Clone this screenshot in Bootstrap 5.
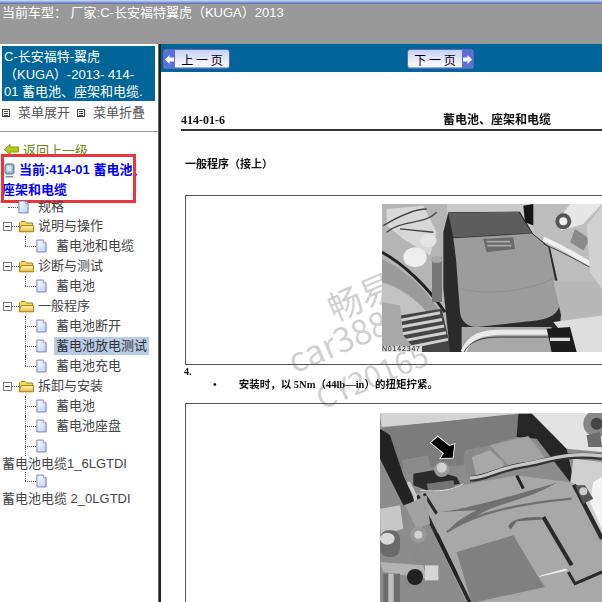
<!DOCTYPE html>
<html lang="zh">
<head>
<meta charset="utf-8">
<title>蓄电池、座架和电缆</title>
<link href="https://cdn.jsdelivr.net/npm/bootstrap@5.3.0/dist/css/bootstrap.min.css" rel="stylesheet">
<style>
html,body{height:602px;overflow:hidden;background:#fff}
body{font-family:"Liberation Sans","Noto Sans CJK SC",sans-serif;font-size:13px;line-height:1.2;color:#333;width:602px;position:relative}
.topstripe{height:4px;background:linear-gradient(#d5def2,#4a6cc0)}
.topbar{height:40px;background:#999;color:#fff;padding:0 2px;font-size:13px;line-height:17px;white-space:nowrap}
.mainrow{height:558px}
.leftpane{width:158px;flex:none;overflow:hidden;position:relative}
.divider{width:3px;flex:none;background:#222;border-left:1px solid #666}
.rightpane{flex:1;min-width:0;position:relative;overflow:hidden}
.titlebox{margin:2px 2px 0 2px;width:153px;height:55px;background:#069;color:#fff;font-size:13px;line-height:17.500px;padding:2px 0 0 2px;overflow:hidden}
.menurow{padding:4px 2px 0;border-bottom:1px solid #999;height:31px;color:#555;gap:7px}
.menuitem{display:flex;align-items:center;gap:8px;height:16px;white-space:nowrap}
.menubox{width:8px;height:8px;border:1px solid #444;background:linear-gradient(#444,#444) center/4px 1px no-repeat,linear-gradient(#444,#444) center 1px/4px 1px no-repeat,linear-gradient(#444,#444) center 5px/4px 1px no-repeat}
.backrow{padding:12px 0 0 4px;height:21px;gap:4px;color:#6c8a12;line-height:14px;white-space:nowrap}
.backrow a{color:#6c8a12;text-decoration:underline}
.currentbox{font-weight:700;color:#00f;line-height:20px;height:47px;padding:7px 2px 0 2px;font-size:13px}
.currentline{padding-left:2px;display:flex;align-items:center;gap:4px;white-space:nowrap}
.redmark{position:absolute;left:1px;top:110px;width:135px;height:49px;border:3px solid #e9353c;pointer-events:none}
.treelist{color:#444;margin-top:-3px}
.treerow{height:20px;display:flex;align-items:center;position:relative;white-space:nowrap}
.rootrow{padding-left:18px;gap:4px}
.rootrow::before{content:"";position:absolute;left:11px;width:8px;border-top:1px dotted #555}
.plainrow{padding-left:18px;gap:9px;height:19px}
.plainrow::before{content:"";position:absolute;left:8px;width:10px;border-top:1px dotted #555;top:10px}
.minusbox{position:absolute;left:3px;top:6px;width:9px;height:9px;background:linear-gradient(#444,#444) center/5px 1px no-repeat #fff;border:1px solid #777;z-index:1}
.childrow{padding-left:36px;gap:9px}
.childrow::before{content:"";position:absolute;left:25px;width:11px;border-top:1px dotted #555;top:10px}
.childrow::after{content:"";position:absolute;left:25px;top:0;height:20px;border-left:1px dotted #555}
.lastchild::after{height:10px}
.selectedtext{background:#b8cbe8;padding:0 2px;margin-left:-2px;line-height:18px;color:#333}
.looseline{height:16px;padding-left:2px;line-height:16px;white-space:nowrap;color:#444}
.looselast{height:18px;line-height:18px;margin-top:1px}
.iconrow{height:17px}
.iconrow::before{top:9px}.iconrow::after{height:9px}
.navstrip{height:28px;background:#069;padding:5px 0 0 2px}
.pagebtn{width:67px;height:20px;padding:0;border:1px solid #5a68bd;border-radius:3px;background:linear-gradient(#c9d0f7,#fff);box-shadow:inset 0 -1px 0 #9aa6dc;color:#000;font-size:12px;line-height:17px;display:flex;align-items:center;overflow:hidden;font-family:"Noto Sans CJK SC",sans-serif}
.pagebtn:hover{color:#000}
.arrowcell{width:11px;height:100%;background:#5a6fd8;flex:none;display:flex;align-items:center;justify-content:center}
.btnlabel{flex:1;text-align:center;white-space:pre}
.nextbtn{margin-left:177px}
.docpage{font-family:"Liberation Serif","Noto Sans CJK SC",serif;color:#111;filter:blur(.35px);padding:0 0 0 20px;position:relative;z-index:1}
.dochead{height:59px;border-bottom:2px solid #333;padding-top:40px;font-weight:700;font-size:12px;line-height:17px;width:460px;position:relative}
.doctitle{position:absolute;left:262px;top:38px;font-size:12px;font-weight:700;white-space:nowrap;font-family:"Noto Sans CJK SC",sans-serif}
.subhead{height:64px;padding:26px 0 0 4px;font-size:11px;font-weight:700;font-family:"Noto Sans CJK SC",sans-serif}
.figbox{margin-left:4px;width:460px;border:1.500px solid #555;display:flex;justify-content:flex-start}
.figone{height:170px;padding:8px 0 0 196px}
.figtwo{height:230px;padding:9px 0 0 194px;margin-top:11px}
.stepno{font-size:10px;font-weight:700;line-height:12px;padding:1px 0 0 3px}
.stepline{font-size:10.500px;font-weight:700;line-height:14px;padding-left:32px;display:flex;gap:22px;white-space:nowrap}
.photoart{display:block;flex:none}
.wmark{position:absolute;color:rgba(140,140,140,.42);transform:rotate(-23deg);transform-origin:left center;white-space:nowrap;font-family:"Noto Sans CJK SC","Liberation Sans",sans-serif;line-height:1;pointer-events:none;z-index:0}
.wm1{left:168px;top:248px;font-size:34px}
.wm2{left:128px;top:300px;font-size:34px}
.wm3{left:156px;top:339px;font-size:30px}
</style>
</head>
<body>
<svg width="0" height="0" class="position-absolute">
<defs>
<linearGradient id="pg" x1="0" y1="0" x2="1" y2="1"><stop offset="0" stop-color="#fff"/><stop offset="1" stop-color="#b9cef0"/></linearGradient>
<linearGradient id="fg" x1="0" y1="0" x2="0" y2="1"><stop offset="0" stop-color="#fff6b8"/><stop offset="1" stop-color="#e8bd45"/></linearGradient>
<symbol id="pageic" viewBox="0 0 12 14"><path d="M1 .5h7l3 3v10H1z" fill="url(#pg)" stroke="#6b78b5"/><path d="M8 .5v3h3" fill="#fff" stroke="#8c97c8"/></symbol>
<symbol id="folderic" viewBox="0 0 16 13"><path d="M1.5 11.5V3l1.5-1.5h4L8.500 3h6v8.500z" fill="#f5d469" stroke="#a8861c"/><path d="M1 11.800 3 5.500h12.500v6.300z" fill="url(#fg)" stroke="#a8861c"/></symbol>
<filter id="soft"><feGaussianBlur stdDeviation="2"/></filter>
</defs>
</svg>
<div class="topstripe"></div>
<div class="topbar">当前车型： 厂家:C-长安福特翼虎（KUGA）2013</div>
<div class="d-flex mainrow">
  <aside class="leftpane">
    <div class="titlebox">C-长安福特-翼虎<br>（KUGA）-2013- 414-<br>01 蓄电池、座架和电缆.</div>
    <div class="d-flex menurow">
      <span class="menuitem"><i class="menubox"></i>菜单展开</span>
      <span class="menuitem"><i class="menubox"></i>菜单折叠</span>
    </div>
    <div class="d-flex backrow">
      <svg width="15" height="11" viewBox="0 0 15 11"><path d="M.500 5.500 6 .500v2.500h8.500v5H6v2.500z" fill="#a5d216" stroke="#a8860f"/></svg>
      <a href="#">返回上一级</a>
    </div>
    <div class="currentbox">
      <div class="currentline"><svg width="11" height="15" viewBox="0 0 11 15"><rect x="1" y="1" width="9" height="10" rx="2" fill="#8fb3d9" stroke="#50708f"/><rect x="2.500" y="2.500" width="5" height="6" fill="#d9ecf9"/><path d="M2 13h7l1 1.500H1z" fill="#7d8ea0"/></svg><span>当前:414-01 蓄电池、</span></div>
      <div class="text-nowrap">座架和电缆</div>
    </div>
    <div class="redmark"></div>
    <div class="treelist">
      <div class="treerow plainrow"><svg width="11" height="14"><use href="#pageic"/></svg><span>规格</span></div>
      <div class="treerow rootrow"><i class="minusbox"></i><svg width="16" height="13"><use href="#folderic"/></svg><span>说明与操作</span></div>
      <div class="treerow childrow lastchild"><svg width="11" height="14"><use href="#pageic"/></svg><span>蓄电池和电缆</span></div>
      <div class="treerow rootrow"><i class="minusbox"></i><svg width="16" height="13"><use href="#folderic"/></svg><span>诊断与测试</span></div>
      <div class="treerow childrow lastchild"><svg width="11" height="14"><use href="#pageic"/></svg><span>蓄电池</span></div>
      <div class="treerow rootrow"><i class="minusbox"></i><svg width="16" height="13"><use href="#folderic"/></svg><span>一般程序</span></div>
      <div class="treerow childrow"><svg width="11" height="14"><use href="#pageic"/></svg><span>蓄电池断开</span></div>
      <div class="treerow childrow"><svg width="11" height="14"><use href="#pageic"/></svg><span class="selectedtext">蓄电池放电测试</span></div>
      <div class="treerow childrow lastchild"><svg width="11" height="14"><use href="#pageic"/></svg><span>蓄电池充电</span></div>
      <div class="treerow rootrow"><i class="minusbox"></i><svg width="16" height="13"><use href="#folderic"/></svg><span>拆卸与安装</span></div>
      <div class="treerow childrow"><svg width="11" height="14"><use href="#pageic"/></svg><span>蓄电池</span></div>
      <div class="treerow childrow"><svg width="11" height="14"><use href="#pageic"/></svg><span>蓄电池座盘</span></div>
      <div class="treerow childrow"><svg width="11" height="14"><use href="#pageic"/></svg></div>
      <div class="looseline">蓄电池电缆1_6LGTDI</div>
      <div class="treerow childrow iconrow lastchild"><svg width="11" height="14"><use href="#pageic"/></svg></div>
      <div class="looseline looselast">蓄电池电缆 2_0LGTDI</div>
    </div>
  </aside>
  <div class="divider"></div>
  <main class="rightpane">
    <div class="navstrip d-flex">
      <a class="btn pagebtn" href="#"><span class="arrowcell"><svg width="9" height="9" viewBox="0 0 9 9"><path d="M0 4.500 4.500 0v2.500H9v4H4.500V9z" fill="#fff"/></svg></span><span class="btnlabel">上 一 页</span></a>
      <a class="btn pagebtn nextbtn" href="#"><span class="btnlabel">下 一 页</span><span class="arrowcell"><svg width="9" height="9" viewBox="0 0 9 9"><path d="M9 4.500 4.500 0v2.500H0v4h4.500V9z" fill="#fff"/></svg></span></a>
    </div>
    <div class="wmark wm1">畅易</div>
    <div class="wmark wm2">car388</div>
    <div class="wmark wm3">CY20165</div>
    <div class="docpage">
      <div class="dochead">414-01-6<span class="doctitle">蓄电池、座架和电缆</span></div>
      <div class="subhead">一般程序（接上）</div>
      <div class="figbox figone">
        <svg class="photoart" width="220" height="148" viewBox="636 45 660 445" preserveAspectRatio="none">
          <g filter="url(#soft)">
          <rect x="636" y="45" width="660" height="445" fill="#c9c9c9"/>
          <path d="M636 45H830L860 490H636z" fill="#b5b5b5"/>
          <path d="M650 60 760 50 800 130 780 200 700 150 650 110z" fill="#d8d8d8"/>
          <path d="M640 110C690 80 740 60 770 60M650 130C700 90 760 110 800 70M690 120 790 130" stroke="#444" stroke-width="4" fill="none"/>
          <ellipse cx="735" cy="205" rx="35" ry="30" fill="#eee"/>
          <ellipse cx="775" cy="155" rx="25" ry="20" fill="#e4e4e4"/>
          <path d="M636 210C700 240 770 300 810 370L780 385C730 320 680 290 636 280z" fill="#9a9a9a"/>
          <path d="M636 190C700 225 770 290 825 370" stroke="#222" stroke-width="9" fill="none"/>
          <path d="M636 280C690 300 740 330 770 370L700 385 636 340z" fill="#c2c2c2"/>
          <path d="M786 205h30v135h-30z" fill="#777"/><ellipse cx="800" cy="212" rx="17" ry="10" fill="#aaa"/>
          <path d="M690 380 815 360 845 490H740L690 430z" fill="#444"/>
          <g stroke="#d0d0d0" stroke-width="9"><path d="M690 395 810 372"/><path d="M692 415 816 392"/><path d="M698 435 822 412"/><path d="M706 455 828 432"/><path d="M722 475 834 452"/></g>
          <path d="M636 340 690 350 700 440 740 490H636z" fill="#a8a8a8"/>
          <path d="M1080 45H1296V490H1150z" fill="#bdbdbd"/>
          <path d="M820 130 835 70 1050 68 1090 135 1140 175 1178 345 1170 405 1220 490H840L820 300z" fill="#2c2c2c"/>
          <path d="M875 415H1145V490H875z" fill="#a8a8a8"/>
          <path d="M835 72 1045 68 1085 132 850 146z" fill="#5d5d5d"/>
          <path d="M850 148 1085 134 1135 175 1170 345C1165 375 1140 390 1100 395L920 415C890 415 872 395 870 370L858 210z" fill="#9c9c9c"/>
          <path d="M940 150 1030 145 1035 180 950 190z" fill="#6a6a6a"/>
          <path d="M950 158h70M952 170h72" stroke="#a9a9a9" stroke-width="5"/>
          <path d="M870 300C960 320 1060 310 1150 270" stroke="#8e8e8e" stroke-width="3" fill="none"/>
          <path d="M1060 50 1090 45 1090 110 1065 100z" fill="#181818"/>
          <path d="M1200 45 1296 45 1240 105 1175 125 1160 100z" fill="#e6e6e6"/>
          <circle cx="1180" cy="97" r="24" fill="#555"/><circle cx="1180" cy="97" r="12" fill="#eee"/>
          <path d="M1120 150C1190 180 1240 215 1296 245" stroke="#f0f0f0" stroke-width="14" fill="none"/>
          <path d="M1120 165C1190 195 1240 225 1296 255" stroke="#444" stroke-width="3" fill="none"/>
          <path d="M1150 275 1296 280V380L1180 410z" fill="#b8b8b8"/>
          <path d="M1215 120 1260 150 1240 185 1200 160z" fill="#8a8a8a"/>
          <path d="M1296 50V300L1260 250 1250 110z" fill="#d1d1d1"/>
          <path d="M1150 400 1296 380V490H1220z" fill="#ddd"/>
          <path d="M880 490C900 440 940 430 1000 430H1180" stroke="#eaeaea" stroke-width="16" fill="none"/>
          <path d="M880 495C900 452 940 445 1000 445H1180" stroke="#333" stroke-width="3" fill="none"/>
          <path d="M1130 420 1200 415 1220 490H1145z" fill="#1d1d1d"/>
          <path d="M1140 452h60" stroke="#ddd" stroke-width="10"/>
          <rect x="636" y="472" width="120" height="18" fill="#ddd"/>
          </g>
          <text x="636" y="488" font-size="21" textLength="114" font-family="Liberation Sans" fill="#111">N0142347</text>
        </svg>
      </div>
      <div class="stepno">4.</div>
      <div class="stepline"><span>•</span><span>安装时，以 5Nm（44lb—in）的扭矩拧紧。</span></div>
      <div class="figbox figtwo">
        <svg class="photoart" width="222" height="190" viewBox="630 53 666 570" preserveAspectRatio="none">
          <g filter="url(#soft)">
          <rect x="630" y="53" width="666" height="570" fill="#8c8c8c"/>
          <path d="M630 53H1100L1040 60 635 95z" fill="#d4d4d4"/>
          <path d="M636 98 1045 55 1040 125 960 150 885 165 880 210 700 220 680 235z" fill="#7c7c7c"/>
          <path d="M630 100 660 120 700 240 735 320 700 330 660 250 630 190z" fill="#222"/>
          <path d="M1045 55H1085L1160 130 1190 160 1210 250 1200 260 1100 130 1040 125z" fill="#262626"/>
          <path d="M1085 53H1296V170L1190 160z" fill="#e3e3e3"/>
          <circle cx="1280" cy="85" r="40" fill="#888"/><circle cx="1280" cy="85" r="18" fill="#444"/>
          <path d="M1250 120 1290 110 1296 155 1255 155z" fill="#6c6c6c"/>
          <path d="M1210 190 1296 200V440L1200 270z" fill="#d0d0d0"/>
          <path d="M1270 260 1296 245V400L1260 320z" fill="#f4f4f4"/>
          <path d="M735 295 1040 240 1210 262 1296 420V623H890z" fill="#a8a8a8"/>
          <path d="M742 300 900 623" stroke="#2a2a2a" stroke-width="11"/>
          <path d="M762 295 800 355" stroke="#2a2a2a" stroke-width="9"/>
          <path d="M1212 268 1296 430" stroke="#2a2a2a" stroke-width="13"/>
          <path d="M695 195 775 180 785 240 705 240z" fill="#8b8b8b"/>
          <path d="M960 150 1075 122 1130 195 1020 215z" fill="#a3a3a3"/>
          <path d="M880 175 910 165 920 235 890 245z" fill="#888"/>
          <path d="M905 185 960 165 1000 200 1000 235 920 245z" fill="#a8a8a8"/>
          <path d="M730 235 790 225 860 245 870 265 770 285 730 270z" fill="#2a2a2a"/>
          <circle cx="815" cy="222" r="23" fill="#9a9a9a"/><circle cx="815" cy="217" r="15" fill="#cfcfcf"/>
          <path d="M770 265 850 255 855 280 775 290z" fill="#757575"/>
          <path d="M900 250C950 250 970 225 1060 210 1130 200 1180 170 1296 185" stroke="#303030" stroke-width="18" fill="none"/>
          <path d="M900 248C950 248 970 222 1060 207 1130 197 1180 168 1296 182" stroke="#c7c7c7" stroke-width="10" fill="none"/>
          <path d="M750 285C800 290 850 285 880 265" stroke="#dadada" stroke-width="3" fill="none"/>
          <path d="M1040 240 1060 280" stroke="#222" stroke-width="9"/>
          <path d="M810 350C900 340 1030 300 1160 262 1080 310 1000 320 940 350 900 375 860 395 830 410L855 385C880 365 900 355 920 345z" fill="#6f6f6f"/>
          <path d="M830 410C920 350 1050 325 1205 310" stroke="#707070" stroke-width="7" fill="none"/>
          <path d="M800 415 860 540" stroke="#222" stroke-width="10"/>
          <path d="M1015 395C1020 375 1050 365 1110 365L1125 372 1040 378 1022 402z" fill="#666"/>
          <path d="M1120 365 1205 510" stroke="#2c2c2c" stroke-width="12"/>
          <path d="M860 470 1030 420 1105 545 1125 575 905 623z" fill="#808080"/>
          <path d="M1105 545 1195 525 1185 520 1115 540z" fill="#eee"/>
          <path d="M1195 530 1215 565 1296 530" stroke="#2a2a2a" stroke-width="9" fill="none"/>
          <path d="M1215 270h30l25 40-30 15z" fill="#555"/>
          <circle cx="1240" cy="288" r="12" fill="#ccc"/>
          <path d="M715 260 735 300 745 390" stroke="#ccc" stroke-width="10" fill="none"/>
          <path d="M705 330 770 300 780 385 740 400z" fill="#a2a2a2"/>
          <circle cx="745" cy="418" r="25" fill="#999"/><circle cx="745" cy="418" r="12" fill="#d2d2d2"/>
          <path d="M740 440 790 540 860 623H780L720 510z" fill="#8b8b8b"/>
          <path d="M630 340 690 330 700 400 632 420z" fill="#c8c8c8"/>
          <rect x="630" y="405" width="60" height="80" rx="25" fill="#6a6a6a"/><ellipse cx="652" cy="430" rx="22" ry="18" fill="#d9d9d9"/>
          <path d="M630 500 760 510 770 550 640 530z" fill="#b3b3b3"/>
          <circle cx="735" cy="545" r="24" fill="#222"/><path d="M765 510h40v45h-40z" fill="#d5d5d5"/>
          <rect x="640" y="535" width="50" height="88" fill="#6d6d6d"/><rect x="655" y="535" width="16" height="88" fill="#c0c0c0"/>
          </g>
          <path d="M783 142 803 124 838 152 853 147 848 187 812 188 822 174z" fill="#000" stroke="#fff" stroke-width="5" paint-order="stroke"/>
        </svg>
      </div>
    </div>
  </main>
</div>
</body>
</html>
